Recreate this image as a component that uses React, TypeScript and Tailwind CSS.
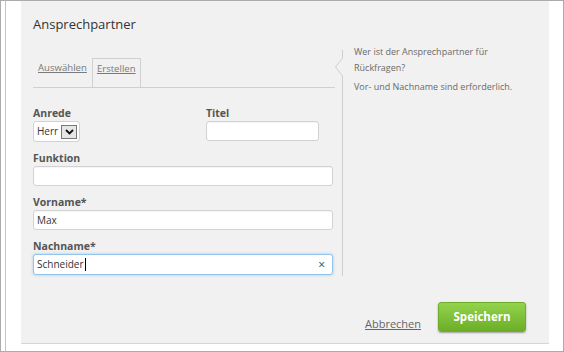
import React from "react";

function Field({ label, children }: { label: string; children: React.ReactNode }) {
  return (
    <div className="flex flex-col">
      <span className="h-[15px] text-[10.5px] leading-[14px] font-bold text-[#555]">{label}</span>
      {children}
    </div>
  );
}

function TextInput({ value = "", width = "w-[300px]" }: { value?: string; width?: string }) {
  return (
    <div
      className={`${width} h-[20px] flex items-center px-[3px] bg-white border border-[#d2d2d2] rounded-[3px] text-[10px] text-[#333] shadow-[inset_0_1px_1px_rgba(0,0,0,0.04)]`}
    >
      {value}
    </div>
  );
}

function Divider() {
  return (
    <svg width="12" height="232" viewBox="0 0 12 232" className="shrink-0">
      <polyline
        points="7.5,6 7.5,14 0.5,23 7.5,32 7.5,232"
        fill="none"
        stroke="#cfcfcf"
        strokeWidth="1"
      />
    </svg>
  );
}

export default function App() {
  return (
    <div
      className="w-[564px] h-[352px] border border-[#ababab] bg-white flex"
      style={{ fontFamily: '"Open Sans", "DejaVu Sans", sans-serif' }}
    >
      <div className="w-[4px]" />
      <div className="w-[16px] border-l border-[#c4c4c4]" />

      <main className="w-[528px] h-[343px] bg-[#f1f1f1] border-b border-[#d6d6d6] flex flex-col pl-[12px]">
        <h1 className="pt-[14px] h-[43px] text-[13px] leading-[18px] text-[#333]">Ansprechpartner</h1>

        <div className="flex">
          <section className="w-[302px] pt-[14px]">
            <div className="flex h-[30px] border-b border-[#cfcfcf] text-[9.6px] text-[#7a7a7a]">
              <span className="px-[5px] pt-[3px] underline">Auswählen</span>
              <span className="px-[4px] pt-[3px] border border-b-0 border-[#d0d0d0] underline">Erstellen</span>
            </div>

            <div className="mt-[18px] flex">
              <div className="w-[173px]">
                <Field label="Anrede">
                  <div className="w-[47px] h-[21px] flex items-center justify-between pl-[3px] pr-[2px] bg-white border border-[#d2d2d2] rounded-[3px] text-[10px] text-[#333]">
                    <span>Herr</span>
                    <span className="w-[16px] h-[14px] flex items-center justify-center bg-[#e6e6e6] border border-[#777]">
                      <svg width="9" height="6" viewBox="0 0 9 6">
                        <polyline points="1,1 4.5,4.5 8,1" fill="none" stroke="#111" strokeWidth="1.8" />
                      </svg>
                    </span>
                  </div>
                </Field>
              </div>
              <Field label="Titel">
                <TextInput width="w-[113px]" />
              </Field>
            </div>

            <div className="mt-[9px] flex flex-col gap-[9px]">
              <Field label="Funktion">
                <TextInput />
              </Field>
              <Field label="Vorname*">
                <TextInput value="Max" />
              </Field>
              <Field label="Nachname*">
                <div className="w-[300px] h-[21px] flex items-center justify-between px-[3px] bg-white border border-[#93c4ee] rounded-[3px] text-[10px] text-[#333] shadow-[0_0_3px_rgba(110,170,230,0.6)]">
                  <span className="flex items-center">
                    Schneider
                    <span className="ml-px w-px h-[13px] bg-black" />
                  </span>
                  <span className="mr-[4px] text-[12px] leading-none text-[#444]">×</span>
                </div>
              </Field>
            </div>
          </section>

          <Divider />

          <aside className="ml-[7px] w-[165px] text-[9px] leading-[16px] text-[#6a6a6a]">
            <p>Wer ist der Ansprechpartner für Rückfragen?</p>
            <p className="mt-[3px]">Vor- und Nachname sind erforderlich.</p>
          </aside>
        </div>

        <footer className="mt-auto flex items-end justify-end gap-[17px] pr-[23px] pb-[11px]">
          <a className="mb-[1px] text-[11px] leading-[15px] text-[#666] underline">Abbrechen</a>
          <button className="w-[88px] h-[30px] rounded-[3px] border border-[#6fae2c] bg-gradient-to-b from-[#93d34c] to-[#6cae26] text-[11.5px] font-bold text-white shadow-[0_1px_2px_rgba(0,0,0,0.35)]">
            Speichern
          </button>
        </footer>
      </main>

      <div className="w-[14px]" />
    </div>
  );
}
